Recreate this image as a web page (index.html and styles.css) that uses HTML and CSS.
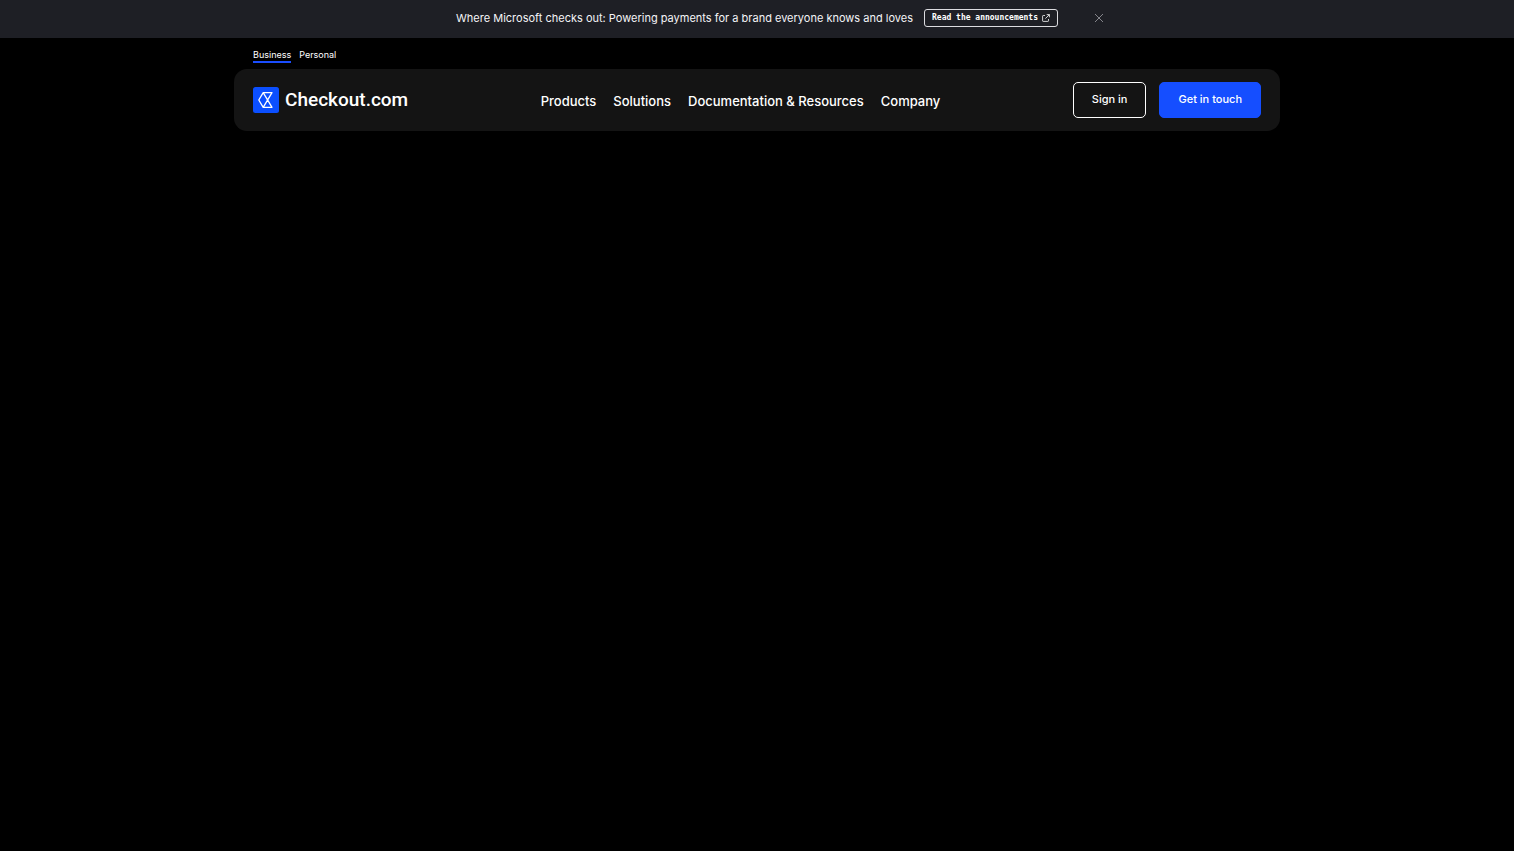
FILE: index.html
```
<!DOCTYPE html>
<html lang="en">
<head>
<meta charset="utf-8">
<meta name="viewport" content="width=device-width, initial-scale=1">
<title>Checkout.com</title>
<link rel="stylesheet" href="styles.css">
</head>
<body>
<aside class="banner" aria-label="Announcement">
  <p class="banner-text">Where Microsoft checks out: Powering payments for a brand everyone knows and loves</p>
  <a class="banner-link" href="#">Read the announcements
    <svg class="external" viewBox="0 0 8 8" aria-hidden="true"><path d="M3 1.5H1.2Q.6 1.5 .6 2.100V6.800Q.6 7.400 1.200 7.400H5.900Q6.500 7.400 6.500 6.800V5M4.700 .6H7.400V3.300M7.400 .6L3.400 4.600"/></svg>
  </a>
  <button class="banner-close" type="button" aria-label="Close">
    <svg viewBox="0 0 10 10" aria-hidden="true"><path d="M1 1L9 9M9 1L1 9"/></svg>
  </button>
</aside>
<header class="header">
  <nav class="audience" aria-label="Audience">
    <a class="audience-link active" href="#" aria-current="page">Business</a>
    <a class="audience-link" href="#">Personal</a>
  </nav>
  <div class="bar">
    <a class="logo" href="#">
      <svg class="logo-mark" viewBox="0 0 26 26" aria-hidden="true"><rect width="26" height="26" rx="2.500" fill="#0b4fff"/><path d="M10.200 5.700H19L10.200 20.300M10.200 5.700L19 20.300H10.200L5.800 13Z" fill="none" stroke="#fff" stroke-width="1.300" stroke-linejoin="round"/></svg>
      <span class="logo-name">Checkout.com</span>
    </a>
    <nav class="menu" aria-label="Main">
      <button class="menu-item" type="button">Products</button>
      <button class="menu-item" type="button">Solutions</button>
      <button class="menu-item" type="button">Documentation &amp; Resources</button>
      <button class="menu-item" type="button">Company</button>
    </nav>
    <div class="actions">
      <a class="button outline" href="#">Sign in</a>
      <a class="button primary" href="#">Get in touch</a>
    </div>
  </div>
</header>
<main></main>
</body>
</html>
```
FILE: styles.css
```
* { box-sizing: border-box; }
body {
  margin: 0;
  min-height: 100vh;
  background: #000;
  color: #fff;
  font-family: Inter, "Liberation Sans", sans-serif;
}
a { color: inherit; text-decoration: none; }
button {
  padding: 0;
  border: 0;
  background: none;
  color: inherit;
  font-family: inherit;
  cursor: pointer;
}
svg { display: block; }
.banner {
  display: flex;
  align-items: center;
  justify-content: center;
  padding: 9px 0 11px 46px;
  background: #1e1f25;
}
.banner-text {
  margin: 0 11px 0 0;
  font-size: 11px;
  line-height: 18px;
  color: #f4f4f7;
}
.banner-link {
  display: flex;
  align-items: center;
  gap: 4px;
  padding: 0 7px;
  border: 1px solid #dcdce0;
  border-radius: 3px;
  font-family: "DejaVu Sans Mono", monospace;
  font-size: 8px;
  font-weight: 700;
  line-height: 16px;
}
.external {
  width: 8px;
  height: 8px;
  fill: none;
  stroke: #fff;
  stroke-width: 0.8;
}
.banner-close { margin-left: 36px; }
.banner-close svg {
  width: 10px;
  height: 10px;
  fill: none;
  stroke: #a0a0a6;
  stroke-width: 0.8;
}
.header {
  max-width: 1046px;
  margin: 0 auto;
  padding-top: 10px;
}
.audience {
  display: flex;
  gap: 8px;
  padding: 0 19px 6px;
}
.audience-link {
  border-bottom: 2px solid transparent;
  font-size: 9px;
  line-height: 13px;
}
.audience-link.active { border-color: #1a4dff; }
.bar {
  display: flex;
  align-items: center;
  justify-content: space-between;
  padding: 13px 19px;
  border-radius: 13px;
  background: #141414;
}
.logo {
  display: flex;
  align-items: center;
  gap: 6px;
}
.logo-mark { width: 26px; height: 26px; }
.logo-name {
  font-family: Roboto, sans-serif;
  font-size: 19px;
  font-weight: 500;
  line-height: 24px;
}
.menu { display: flex; gap: 17px; padding-top: 2px; }
.menu-item {
  font-size: 13px;
  font-weight: 500;
  line-height: 20px;
}
.actions { display: flex; gap: 13px; }
.button {
  padding: 8px 18px 10px;
  border: 1px solid #fff;
  border-radius: 5px;
  font-size: 11px;
  font-weight: 500;
  line-height: 16px;
}
.primary { border-color: #154eff; background: #154eff; }
```
